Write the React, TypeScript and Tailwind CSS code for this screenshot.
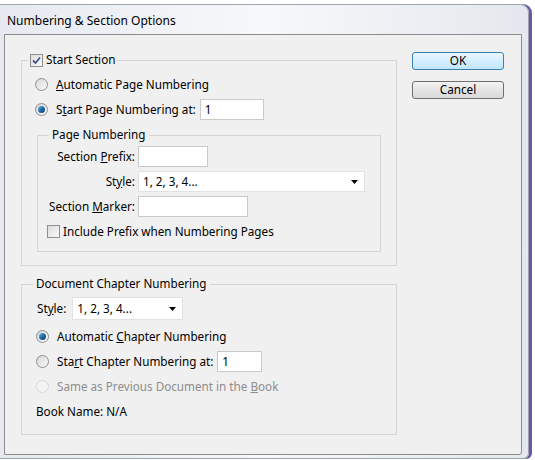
import React from "react";

const font = { fontFamily: '"Noto Sans", "Open Sans", sans-serif' };

function Radio({ checked, disabled }: { checked?: boolean; disabled?: boolean }) {
  return (
    <span
      className={`flex h-[13px] w-[13px] shrink-0 items-center justify-center rounded-full border ${
        disabled
          ? "border-[#d9d9d9] bg-[#f4f4f4]"
          : "border-[#8f8f8f] bg-gradient-to-br from-[#d6d6d6] to-[#fbfbfb]"
      }`}
    >
      {checked && (
        <span className="h-[7px] w-[7px] rounded-full bg-gradient-to-br from-[#6cb6e3] via-[#1c6ea8] to-[#0d3f6b]" />
      )}
    </span>
  );
}

function Checkbox({ checked }: { checked?: boolean }) {
  return (
    <span className="flex h-[13px] w-[13px] shrink-0 items-center justify-center border border-[#8e8f8f] bg-gradient-to-br from-[#dcdcdc] to-[#fafafa]">
      {checked && (
        <svg width="9" height="9" viewBox="0 0 9 9">
          <path d="M1 4.5 L3.5 7 L8 1.5" fill="none" stroke="#3f5590" strokeWidth="1.8" />
        </svg>
      )}
    </span>
  );
}

function Dropdown({ value, width }: { value: string; width: string }) {
  return (
    <div className={`flex h-[21px] ${width} items-center justify-between border border-[#e2e2e2] bg-white pl-[4px] pr-[6px]`}>
      <span>{value}</span>
      <svg width="7" height="4" viewBox="0 0 7 4">
        <path d="M0 0 H7 L3.5 4 Z" fill="#000" />
      </svg>
    </div>
  );
}

function TextBox({ value, width }: { value?: string; width: string }) {
  return (
    <div className={`flex h-[21px] ${width} items-center border border-[#c9c9c9] bg-white pl-[4px]`}>
      {value}
    </div>
  );
}

function RadioRow({
  checked,
  disabled,
  children,
}: {
  checked?: boolean;
  disabled?: boolean;
  children: React.ReactNode;
}) {
  return (
    <div className={`flex h-[25px] items-center gap-[8px] ${disabled ? "text-[#8d8d8d]" : ""}`}>
      <Radio checked={checked} disabled={disabled} />
      {children}
    </div>
  );
}

export default function App() {
  return (
    <div className="flex h-[460px] w-[535px] bg-white text-[11.7px] text-black" style={font}>
      <div className="mt-[4px] flex h-[455px] w-[529px] flex-col rounded-tr-[9px] rounded-br-[6px] border-t border-r border-b border-[#9ea4ab] bg-gradient-to-r from-[#e6eaf0] via-[#f7f8fa] to-[#e4e8ee] shadow-[3px_0_0_#6b57a6]">
        <div className="flex h-[29px] items-center pl-[7px] pt-[3px] text-[12px]">Numbering &amp; Section Options</div>
        <div className="ml-[4px] flex h-[421px] w-[518px] rounded-br-[3px] border border-[#8c8c8c] bg-[#f0f0f0]">
          {/* left column */}
          <div className="flex flex-col pl-[16px]">
            <fieldset className="mt-[17px] h-[214px] w-[376px] border border-[#d5d5d5] pl-[13px]">
              <legend className="ml-[-7px] flex h-[16px] items-center gap-[3px] px-[2px]">
                <Checkbox checked />
                <span>Start Section</span>
              </legend>
              <div className="pt-[4px]">
                <RadioRow>
                  <span>
                    <u>A</u>utomatic Page Numbering
                  </span>
                </RadioRow>
                <RadioRow checked>
                  <span>
                    S<u>t</u>art Page Numbering at:
                  </span>
                  <TextBox value="1" width="w-[64px] -ml-[4px]" />
                </RadioRow>
              </div>
              <fieldset className="ml-[2px] mt-[5px] h-[125px] w-[344px] border border-[#d5d5d5]">
                <legend className="ml-[11px] flex h-[16px] items-center px-[3px]">Page Numbering</legend>
                <div className="pt-[1px]">
                  <div className="flex h-[25px] items-center gap-[3px]">
                    <span className="w-[97px] text-right">
                      Section <u>P</u>refix:
                    </span>
                    <TextBox width="w-[70px]" />
                  </div>
                  <div className="flex h-[25px] items-center gap-[3px]">
                    <span className="w-[97px] text-right">
                      St<u>y</u>le:
                    </span>
                    <Dropdown value="1, 2, 3, 4..." width="w-[227px]" />
                  </div>
                  <div className="flex h-[25px] items-center gap-[3px]">
                    <span className="w-[97px] text-right">
                      Section <u>M</u>arker:
                    </span>
                    <TextBox width="w-[110px]" />
                  </div>
                  <div className="flex h-[25px] items-center gap-[3px] pl-[9px]">
                    <Checkbox />
                    <span>Include Prefix when Numbering Pages</span>
                  </div>
                </div>
              </fieldset>
            </fieldset>

            <fieldset className="mt-[10px] h-[159px] w-[376px] border border-[#d5d5d5] pl-[14px]">
              <legend className="ml-[-3px] flex h-[16px] items-center px-[3px]">Document Chapter Numbering</legend>
              <div className="flex h-[28px] items-center gap-[6px] pt-[5px]">
                <span className="ml-[1px]">
                  St<u>y</u>le:
                </span>
                <Dropdown value="1, 2, 3, 4..." width="w-[111px] h-[23px]" />
              </div>
              <div className="pt-[4px]">
                <RadioRow checked>
                  <span>
                    Automatic <u>C</u>hapter Numbering
                  </span>
                </RadioRow>
                <RadioRow>
                  <span>
                    Sta<u>r</u>t Chapter Numbering at:
                  </span>
                  <TextBox value="1" width="w-[45px] -ml-[4px]" />
                </RadioRow>
                <RadioRow disabled>
                  <span>
                    Same as Previous Document in the <u>B</u>ook
                  </span>
                </RadioRow>
                <div className="flex h-[25px] items-center">Book Name: N/A</div>
              </div>
            </fieldset>
          </div>

          {/* buttons */}
          <div className="ml-[15px] flex flex-col gap-[11px] pt-[17px]">
            <button className="h-[18px] w-[92px] rounded-[3px] border border-[#3c7fb1] bg-gradient-to-b from-[#eaf6fd] to-[#bee6fd] leading-none">
              OK
            </button>
            <button className="h-[18px] w-[92px] rounded-[3px] border border-[#707070] bg-gradient-to-b from-[#f2f2f2] to-[#d9d9d9] leading-none">
              Cancel
            </button>
          </div>
        </div>
      </div>
    </div>
  );
}
